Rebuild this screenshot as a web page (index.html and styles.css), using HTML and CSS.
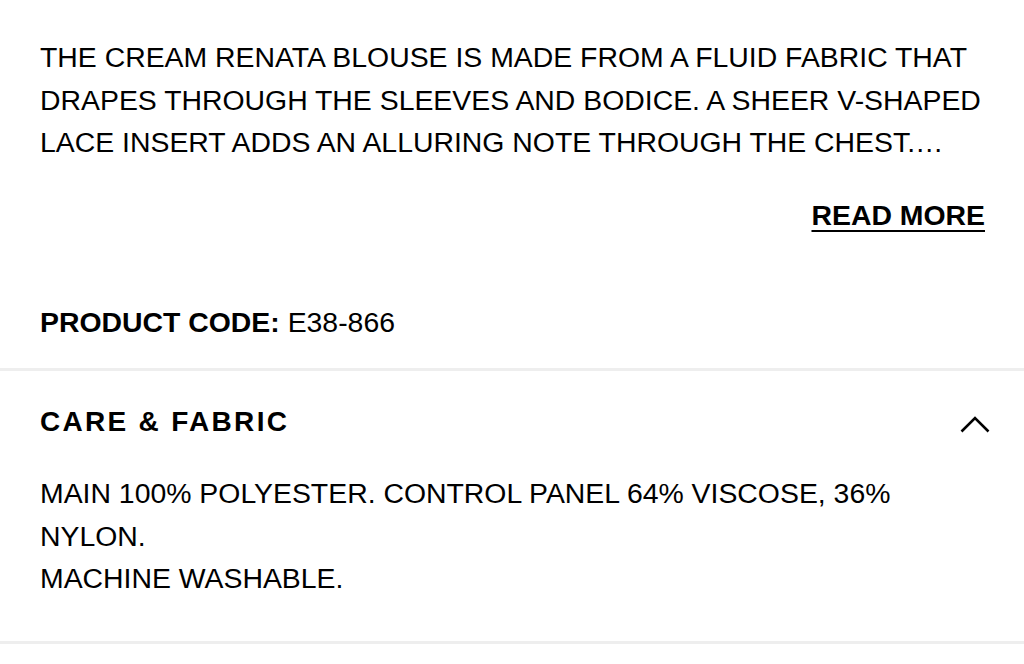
FILE: index.html
```html
<!DOCTYPE html>
<html>
<head>
<meta charset="utf-8">
<link rel="stylesheet" href="styles.css">
</head>
<body>
<div class="page">
  <section class="desc">
    <p class="desc-text">THE CREAM RENATA BLOUSE IS MADE FROM A FLUID FABRIC THAT DRAPES THROUGH THE SLEEVES AND BODICE. A SHEER V-SHAPED LACE INSERT ADDS AN ALLURING NOTE THROUGH THE CHEST.…</p>
    <div class="more-row"><a class="read-more" href="#">READ MORE</a></div>
    <p class="code"><strong>PRODUCT CODE:</strong> E38-866</p>
  </section>
  <section class="acc">
    <div class="acc-head">
      <h2 class="acc-title">CARE &amp; FABRIC</h2>
      <svg class="chev" width="30" height="18" viewBox="0 0 30 18"><path d="M1.5 16.5 L15 3 L28.5 16.5" fill="none" stroke="#000" stroke-width="2.6"/></svg>
    </div>
    <p class="acc-body">MAIN 100% POLYESTER. CONTROL PANEL 64% VISCOSE, 36% NYLON.<br>MACHINE WASHABLE.</p>
  </section>
</div>
</body>
</html>
```

FILE: styles.css
```css
* { box-sizing: border-box; }
html, body { margin: 0; padding: 0; background: #fff; }
body { font-family: "Liberation Sans", Arial, sans-serif; color: #000; width: 1024px; height: 664px; overflow: hidden; }
.desc { padding: 36px 39px 0 40px; }
.desc-text { margin: 0; font-size: 28.4px; line-height: 42.6px; }
.more-row { display: flex; justify-content: flex-end; margin-top: 30px; }
.read-more { color: #000; font-weight: bold; font-size: 28.4px; line-height: 42.6px; text-decoration: underline; text-decoration-thickness: 2px; text-underline-offset: 5px; }
.code { margin: 65px 0 0; font-size: 28.4px; line-height: 42.6px; padding-bottom: 24px; }
.code strong { font-weight: bold; }
.acc { border-top: 3px solid #eeeeee; border-bottom: 3px solid #eeeeee; padding: 30px 39px 41px 40px; }
.acc-head { display: flex; justify-content: space-between; align-items: center; height: 42.6px; }
.acc-title { margin: 0; font-size: 28px; line-height: 42.6px; font-weight: bold; letter-spacing: 2.3px; }
.chev { margin-right: -5px; margin-top: 3px; }
.acc-body { margin: 28.6px 0 0; font-size: 28.4px; line-height: 42.6px; }
```
